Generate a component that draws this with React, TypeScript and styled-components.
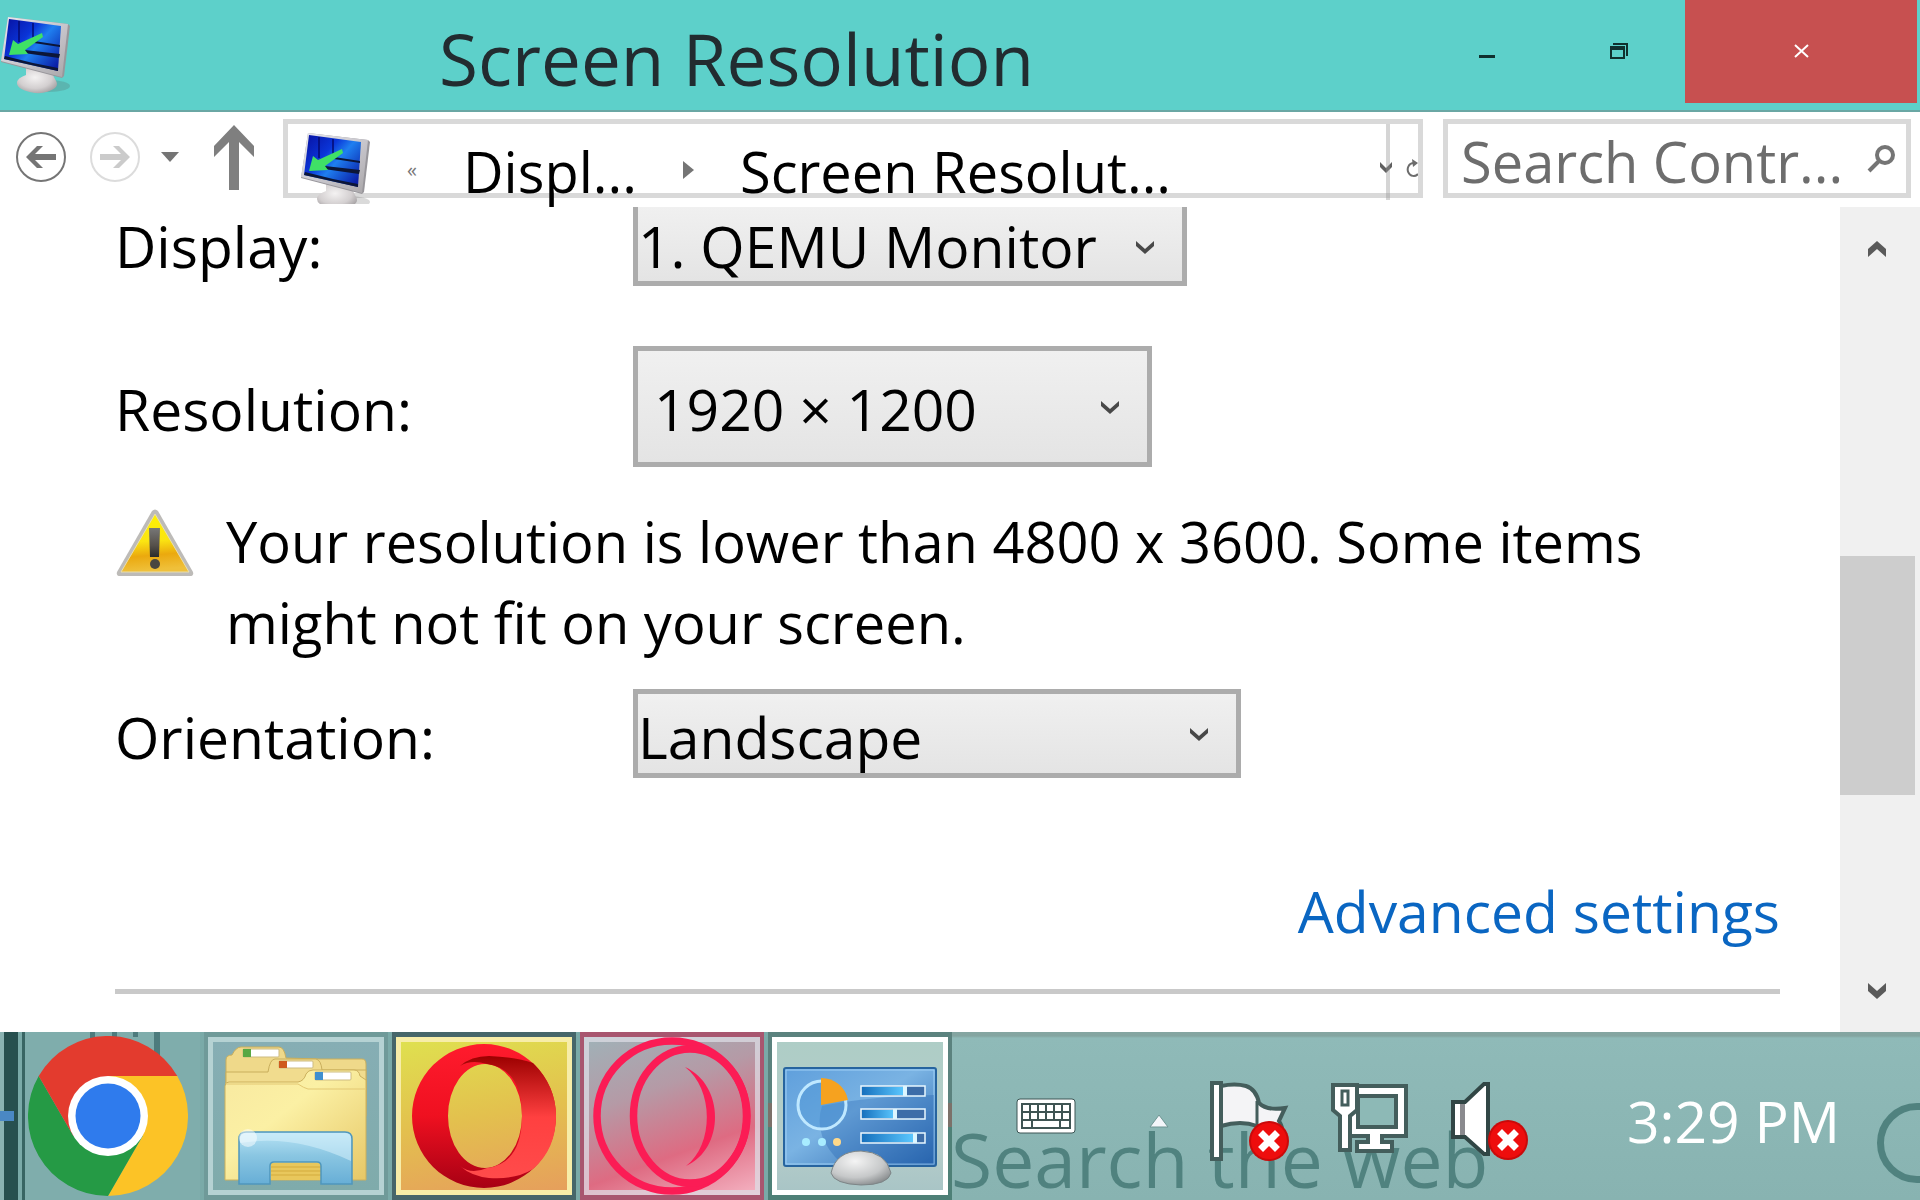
import React from "react";
import styled, { createGlobalStyle, css } from "styled-components";

const FONT = '"Open Sans", "Noto Sans", sans-serif';
const BODY = "57px";

const GlobalStyle = createGlobalStyle`
  *, *::before, *::after { box-sizing: border-box; }
  body { margin: 0; background: #fff; font-family: ${FONT}; font-size: ${BODY}; color: #000; }
  button, input, select { font: inherit; color: inherit; margin: 0; padding: 0; border: 0; border-radius: 0; background: none; }
  svg { display: block; flex: none; }
`;

/* ---------- window ---------- */

const Desktop = styled.div`
  display: flex;
  flex-direction: column;
  height: 100vh;
  min-height: 900px;
  overflow: hidden;
`;

const TitleBar = styled.header`
  display: flex;
  flex: none;
  height: 112px;
  background: #5dd0ca;
  border-bottom: 2px solid #6aa7a4;
`;

const AppIcon = styled.span`
  padding-top: 16px;
`;

const Title = styled.h1`
  flex: 1;
  margin: 0;
  padding: 8px 20px 0 0;
  font-size: 71px;
  font-weight: 400;
  line-height: 102px;
  text-align: center;
  white-space: nowrap;
  color: #222c30;
`;

const CaptionButton = styled.button<{ $close?: boolean }>`
  display: flex;
  justify-content: center;
  width: 132px;
  height: 103px;
  padding-top: 43px;
  ${(p) =>
    p.$close &&
    css`
      width: 232px;
      margin-right: 3px;
      background: #c75050;
    `}
`;

/* ---------- navigation bar ---------- */

const NavBar = styled.nav`
  display: flex;
  flex: none;
  align-items: center;
  height: 95px;
  padding: 7px 9px 9px 16px;
`;

const NavButton = styled.button<{ $after: number }>`
  margin: 0 ${(p) => p.$after}px 3px 0;
`;

const AddressBar = styled.div`
  display: flex;
  flex: 1;
  min-width: 0;
  height: 79px;
  border: 5px solid #d9d9d9;
`;

const Crumbs = styled.div`
  display: flex;
  flex: 1;
  min-width: 0;
  height: 80px;
  padding: 8px 0 0 12px;
`;

const Crumb = styled.a`
  position: relative;
  font-size: 56px;
  line-height: 78px;
  white-space: nowrap;
  color: #000;
  text-decoration: none;
`;

const CrumbMark = styled.span<{ $before: number; $after: number }>`
  display: flex;
  flex: none;
  align-items: center;
  height: 76px;
  margin: 0 ${(p) => p.$after}px 0 ${(p) => p.$before}px;
  font-size: 20px;
  line-height: 20px;
  color: #777;
`;

const HistoryButton = styled.button`
  position: relative;
  width: 20px;
  height: 76px;
  padding: 11px 0 0 3px;

  &::before {
    content: "";
    position: absolute;
    top: 0;
    left: 9px;
    width: 4px;
    height: 76px;
    background: rgba(150, 150, 150, 0.4);
  }
`;

const RefreshButton = styled.button`
  width: 12px;
  margin-left: 9px;
  padding-top: 18px;
  overflow: hidden;
`;

const SearchBox = styled.div`
  display: flex;
  align-items: center;
  width: 468px;
  height: 79px;
  margin-left: 20px;
  padding: 0 11px 0 13px;
  border: 5px solid #d9d9d9;
`;

const SearchInput = styled.input`
  flex: 1;
  min-width: 0;
  height: 69px;
  padding-top: 4px;
  font-size: 56px;
  outline: none;

  &::placeholder {
    color: #6d6d6d;
    opacity: 1;
  }
`;

/* ---------- settings page ---------- */

const Body = styled.div`
  display: flex;
  flex: 1;
  min-height: 0;
`;

const Page = styled.main`
  flex: 1;
  min-width: 0;
  padding: 0 60px 0 115px;
  overflow: hidden;
`;

const Field = styled.div<{ $before?: number }>`
  display: flex;
  align-items: baseline;
  margin-top: ${(p) => p.$before ?? 0}px;
`;

const FieldLabel = styled.label`
  width: 518px;
  line-height: 60px;
`;

const Picker = styled.span`
  display: inline-grid;
  align-items: center;

  > * {
    grid-area: 1 / 1;
  }

  svg {
    justify-self: end;
    margin: 2px 33px 0 0;
    pointer-events: none;
  }
`;

const Select = styled.select<{ $w: number; $h: number; $clipped?: boolean; $indent?: number }>`
  appearance: none;
  width: ${(p) => p.$w}px;
  height: ${(p) => p.$h}px;
  padding: ${(p) => (p.$clipped ? 0 : 4)}px 0 ${(p) => (p.$clipped ? 2 : 0)}px ${(p) => p.$indent ?? 0}px;
  border: 5px solid #acacac;
  border-top-width: ${(p) => (p.$clipped ? 0 : 5)}px;
  background: linear-gradient(#f0f0f0, #e4e4e4);
  outline: none;
`;

const Notice = styled.div`
  display: flex;
  margin-top: 34px;
`;

const NoticeIcon = styled.span`
  width: 111px;
  padding: 8px 0 0 1px;
`;

const NoticeText = styled.p`
  flex: 1;
  margin: 0;
  font-size: 56px;
  line-height: 81px;
`;

const Links = styled.div`
  display: flex;
  justify-content: flex-end;
  margin-top: 93px;
`;

const Link = styled.a`
  line-height: 80px;
  color: #0a66c2;
  text-decoration: none;
`;

const Rule = styled.hr`
  height: 5px;
  margin: 38px 0 0;
  border: 0;
  background: #c9c9c9;
`;

const ScrollBar = styled.div`
  display: flex;
  flex-direction: column;
  width: 80px;
  background: #f0f0f0;
`;

const ScrollButton = styled.button`
  display: flex;
  flex: none;
  align-items: center;
  justify-content: center;
  width: 73px;
  height: 83px;
`;

const Track = styled.div<{ $grow: number }>`
  flex: ${(p) => p.$grow};
`;

const Thumb = styled.div`
  flex: 239;
  width: 75px;
  background: #cdcdcd;
`;

/* ---------- taskbar ---------- */

const TaskBar = styled.footer`
  position: relative;
  display: flex;
  flex: none;
  height: 168px;
  overflow: hidden;
  background: linear-gradient(#84a5a1 0 4px, #8fbab8 6px, #88b3b1);
`;

const Wallpaper = styled.div`
  position: absolute;
  bottom: 1px;
  left: 951px;
  font-size: 75px;
  line-height: 80px;
  white-space: nowrap;
  color: #50827f;
`;

const Ring = styled.span`
  position: absolute;
  top: 71px;
  right: -37px;
  width: 80px;
  height: 80px;
  border: 7px solid #50827f;
  border-radius: 50%;
`;

const Apps = styled.div`
  position: relative;
  display: flex;
  gap: 4px;
  padding-left: 22px;
  background:
    linear-gradient(#4a88c4, #4a88c4) 0 79px / 14px 10px no-repeat,
    linear-gradient(90deg, #8ab3b2 0 4px, #27504f 4px 18px, #7aaaa8 18px);
`;

const INK = "linear-gradient(#4d7b7d, #4d7b7d)";

const ChromeButton = styled.button`
  width: 178px;
  padding: 0 0 0 3px;
  border-left: 3px solid #386563;
  background:
    ${INK} 65px 0 / 5px 6px no-repeat,
    ${INK} 87px 0 / 5px 6px no-repeat,
    ${INK} 108px 0 / 5px 5px no-repeat,
    ${INK} 129px 0 / 6px 26px no-repeat,
    #7fadac;
`;

type Tone = "folder" | "opera" | "gx" | "panel";

const tones: Record<Tone, { edge: string; frame: string; fill: string }> = {
  folder: { edge: "#6f9a99", frame: "#b5d2d3", fill: "linear-gradient(#86aeb4, #7fabab)" },
  opera: { edge: "#46666a", frame: "#f7eda8", fill: "linear-gradient(170deg, #dfe04f, #e3c04e 50%, #e69f5c)" },
  gx: {
    edge: "#a8566f",
    frame: "rgba(220, 220, 228, 0.75)",
    fill: "linear-gradient(160deg, #9fb2b8, #b59aa6 35%, #de6b82 68%, #f5b5c4) border-box",
  },
  panel: {
    edge: "linear-gradient(#5b827e 0 71px, #7c716a 71px 95px, #4e8077 95px)",
    frame: "#ffffff",
    fill: "linear-gradient(#aecdc6, #b5cdca 70%, #a9c5c6)",
  },
};

const TaskButton = styled.button<{ $tone: Tone }>`
  display: flex;
  width: 184px;
  padding: 5px 4px;
  background: ${(p) => tones[p.$tone].edge};

  > span {
    display: flex;
    flex: 1;
    align-items: center;
    justify-content: center;
    border: 5px solid ${(p) => tones[p.$tone].frame};
    background: ${(p) => tones[p.$tone].fill};
  }
`;

const Tray = styled.div`
  position: relative;
  display: flex;
  align-items: center;
  gap: 40px;
  margin-left: auto;
  padding: 10px 80px 0 0;
`;

const KeyboardButton = styled.button`
  margin: 0 33px 10px 0;
`;

const Clock = styled.time`
  margin-left: 59px;
  line-height: 80px;
  color: #fff;
`;

/* ---------- drawings ---------- */

const MonitorIcon = ({ id, cut = 0 }: { id: string; cut?: number }) => (
  <svg width="72" height={78 - cut} viewBox={`3 7 72 ${78 - cut}`} aria-hidden="true">
    <defs>
      <linearGradient id={`${id}s`} x1="0" y1="0" x2="1" y2="0.8">
        <stop offset="0" stopColor="#0710a0" />
        <stop offset="0.4" stopColor="#0a35d8" />
        <stop offset="0.6" stopColor="#1f7ff0" />
        <stop offset="1" stopColor="#0a1fa8" />
      </linearGradient>
      <linearGradient id={`${id}f`} x1="0" y1="0" x2="1" y2="1">
        <stop offset="0" stopColor="#e8e8ee" />
        <stop offset="0.6" stopColor="#c4c2c8" />
        <stop offset="1" stopColor="#a9a6a8" />
      </linearGradient>
      <radialGradient id={`${id}b`} cx="0.45" cy="0.4" r="0.7">
        <stop offset="0" stopColor="#f4f2f2" />
        <stop offset="0.6" stopColor="#d3cfd0" />
        <stop offset="1" stopColor="#9b9799" />
      </radialGradient>
    </defs>
    <ellipse cx="52" cy="77" rx="21" ry="6" fill="#555" opacity="0.22" />
    <path d="M29 58 L55 64 L58 70 Q62 76 58 79 Q50 85 38 84 Q20 81 20 74 Q20 69 29 66Z" fill={`url(#${id}b)`} />
    <path d="M11 8 L71 15 L73 17 L67 67 L65 69 L4 53 Z" fill="#98969b" />
    <path d="M11 8 L71 15 L65 68 L4 52 Z" fill={`url(#${id}f)`} />
    <path d="M12 10 L64 17 L61 62 L7 50 Z" fill={`url(#${id}s)`} />
    <path d="M22 12 V33 M36 14 V30" stroke="#050a70" strokeWidth="1.5" />
    <path d="M37 32 L63 36 V38 L37 34Z M28 41 L63 45 L62 49 L27 44Z M8 47 L36 54 L61 59 V62 L7 50Z" fill="#0c1638" />
    <path d="M45 24 L46 28 L28 41 L31 45 L12 46 L16 31 L21 35 Z" fill="#3fe066" />
  </svg>
);

const RoundArrow = ({ color, ring, flip }: { color: string; ring: string; flip?: boolean }) => (
  <svg width="50" height="50" viewBox="0 0 50 50" aria-hidden="true">
    <circle cx="25" cy="25" r="24" fill="none" stroke={ring} strokeWidth="2" />
    <g transform={flip ? "matrix(-1 0 0 1 50 0)" : undefined}>
      <path d="M40 22 H19 L27 14 H21 L10 25 L21 36 H27 L19 28 H40Z" fill={color} />
    </g>
  </svg>
);

const Chevron = () => (
  <svg width="18" height="13" viewBox="0 0 18 13" aria-hidden="true">
    <path d="M0 0 L9 8 L18 0 V5 L9 13 L0 5Z" fill="#484848" />
  </svg>
);

const ScrollArrow = ({ down }: { down?: boolean }) => (
  <svg width="18" height="16" viewBox="0 0 18 16" aria-hidden="true">
    <path d={down ? "M0 0 L9 8 L18 0 V8 L9 16 L0 8Z" : "M0 16 L9 8 L18 16 V8 L9 0 L0 8Z"} fill="#5a5a5a" />
  </svg>
);

const WarningIcon = () => (
  <svg width="78" height="68" viewBox="0 0 78 68" aria-hidden="true">
    <defs>
      <linearGradient id="wy" x1="0" y1="0" x2="0.1" y2="1">
        <stop offset="0" stopColor="#fff200" />
        <stop offset="0.5" stopColor="#fbe512" />
        <stop offset="0.75" stopColor="#eba90e" />
        <stop offset="1" stopColor="#efc03a" />
      </linearGradient>
      <linearGradient id="wg" x1="0" y1="0" x2="0" y2="1">
        <stop offset="0" stopColor="#777" />
        <stop offset="0.6" stopColor="#55504a" />
        <stop offset="1" stopColor="#2b2b2b" />
      </linearGradient>
    </defs>
    <path d="M36 2 Q39 -1 42 2 L77 63 Q78 67 74 67 H4 Q0 67 1 63Z" fill="#bdbbb8" />
    <path d="M39 5 L73 63 H5Z" fill="url(#wy)" stroke="#e9dfae" strokeWidth="1" />
    <path d="M33 19 H44 L43 48 H34Z" fill="url(#wg)" />
    <ellipse cx="39" cy="55" rx="5" ry="5" fill="#4a4740" />
  </svg>
);

const ChromeIcon = () => (
  <svg width="160" height="160" viewBox="0 0 160 160" aria-hidden="true">
    <path d="M80 80 L10.700 40 A80 80 0 0 1 149.300 40 Z" fill="#e33b2e" />
    <path d="M80 40 H149.300 A80 80 0 0 1 80 160 L114.600 100 Z" fill="#fcc326" />
    <path d="M10.700 40 L45.400 100 L114.600 100 L80 160 A80 80 0 0 1 10.700 40Z" fill="#259a45" />
    <path d="M10.700 40 L45.400 100 L80 80 L80 40Z" fill="#e33b2e" />
    <circle cx="80" cy="80" r="40" fill="#fff" />
    <circle cx="80" cy="80" r="32.500" fill="#2f7bed" />
  </svg>
);

const FolderIcon = () => (
  <svg width="144" height="140" viewBox="0 0 144 140" aria-hidden="true">
    <defs>
      <linearGradient id="ff" x1="0" y1="0" x2="1" y2="1">
        <stop offset="0" stopColor="#f8e9a0" />
        <stop offset="0.4" stopColor="#fbf0a4" />
        <stop offset="1" stopColor="#e6c766" />
      </linearGradient>
      <linearGradient id="fb" x1="0" y1="0" x2="0" y2="1">
        <stop offset="0" stopColor="#b9e4f5" />
        <stop offset="0.45" stopColor="#8ac6e2" />
        <stop offset="1" stopColor="#67aed6" />
      </linearGradient>
    </defs>
    <path d="M2 14 Q2 9 8 9 Q12 1 17 1 H55 Q60 1 62 12 L96 13 H138 Q142 13 142 18 V60 H2Z" fill="#efd98a" stroke="#c9ae5c" />
    <rect x="19" y="3" width="36" height="8" rx="1" fill="#fff" stroke="#cdbb80" />
    <rect x="19" y="3" width="8" height="8" fill="#58a844" />
    <path d="M2 26 H44 Q46 13 51 13 H92 Q97 14 98 24 H142 V70 H2Z" fill="#f1dc8e" stroke="#c9ae5c" />
    <rect x="55" y="15" width="34" height="7" rx="1" fill="#fff" stroke="#cdbb80" />
    <rect x="55" y="15" width="8" height="7" fill="#cf5a1d" />
    <path d="M1 40 Q1 36 5 36 H74 Q80 35 82 28 Q84 24 89 24 H130 Q135 24 136 30 L142 34 V134 H1Z" fill="url(#ff)" stroke="#ccb05c" />
    <rect x="91" y="26" width="36" height="8" rx="1" fill="#fff" stroke="#cdbb80" />
    <rect x="91" y="26" width="8" height="8" fill="#3f8fcf" />
    <path d="M2 38 H74 Q80 42 84 43 H141" fill="none" stroke="#e3c873" strokeWidth="1" />
    <path d="M47 117 H97 V134 H47Z" fill="#e8c75c" />
    <path d="M47 121 H97 M47 125 H97 M47 129 H97" stroke="#d3ab3c" />
    <path d="M15 93 Q15 86 22 86 H121 Q128 86 128 93 V138 H97 V120 Q97 116 93 116 H50 Q46 116 46 120 V138 H15Z" fill="url(#fb)" stroke="#4f97bd" strokeWidth="1.500" />
    <path d="M16 97 Q70 88 127 115 V93 Q127 87 121 87 H22 Q16 87 16 93Z" fill="#d5f1fb" opacity="0.55" />
    <circle cx="24" cy="92" r="9" fill="#fff" opacity="0.5" />
  </svg>
);

const OperaIcon = () => (
  <svg width="146" height="146" viewBox="0 0 146 146" aria-hidden="true">
    <defs>
      <linearGradient id="o1" x1="0" y1="0" x2="0" y2="1">
        <stop offset="0" stopColor="#ff1b2d" />
        <stop offset="0.5" stopColor="#ef1020" />
        <stop offset="1" stopColor="#a70014" />
      </linearGradient>
      <linearGradient id="o2" x1="0" y1="0" x2="0" y2="1">
        <stop offset="0" stopColor="#9c0000" />
        <stop offset="0.5" stopColor="#ff4040" />
        <stop offset="1" stopColor="#ff4b4b" />
      </linearGradient>
    </defs>
    <path fillRule="evenodd" d="M73 1 A72 72 0 1 0 73 145 A72 72 0 1 0 73 1Z M74 21 A37 52 0 1 1 74 125 A37 52 0 1 1 74 21Z" fill="url(#o1)" />
    <path d="M49 23 Q60 13 78 13 Q104 14 122 20 Q145 43 145 73 Q145 106 122 126 Q104 137 78 135 Q60 133 49 123 Q60 132 76 125 Q111 120 111 73 Q111 26 76 21 Q60 16 49 23Z" fill="url(#o2)" />
  </svg>
);

const GxIcon = () => (
  <svg width="160" height="160" viewBox="0 0 160 160" aria-hidden="true" overflow="visible">
    <circle cx="80" cy="80" r="75" fill="none" stroke="#fb1c55" strokeWidth="7.500" />
    <ellipse cx="98" cy="80" rx="56.500" ry="67" fill="none" stroke="#fb1c55" strokeWidth="7.500" />
    <path d="M93 31 C133 49 133 113 94 130 C122 109 122 53 93 31Z" fill="#fb1c55" />
  </svg>
);

const PanelIcon = () => (
  <svg width="156" height="148" viewBox="0 -24 156 148" aria-hidden="true">
    <defs>
      <linearGradient id="pb" x1="0" y1="0" x2="1" y2="1">
        <stop offset="0" stopColor="#5f9fdc" />
        <stop offset="0.45" stopColor="#7ab3e3" />
        <stop offset="1" stopColor="#2a66ae" />
      </linearGradient>
      <linearGradient id="pf" x1="0" y1="0" x2="1" y2="0">
        <stop offset="0" stopColor="#1670bd" />
        <stop offset="1" stopColor="#5cc8ff" />
      </linearGradient>
      <radialGradient id="pd" cx="0.4" cy="0.3" r="0.8">
        <stop offset="0" stopColor="#f4f4f4" />
        <stop offset="0.6" stopColor="#c6c8c9" />
        <stop offset="1" stopColor="#7c8082" />
      </radialGradient>
    </defs>
    <rect x="2" y="2" width="152" height="98" rx="2" fill="url(#pb)" stroke="#27649f" strokeWidth="2" />
    <rect x="4" y="4" width="148" height="94" fill="none" stroke="#9fd0f5" strokeWidth="1" />
    <path d="M40 40 Q90 30 152 29 V98 H60 Q30 70 40 40Z" fill="#1d5cab" opacity="0.3" />
    <circle cx="40" cy="39" r="24" fill="#4e95d6" fillOpacity="0.5" stroke="#bfe8ff" strokeWidth="3" />
    <path d="M39 39 V12 A27 27 0 0 1 66 34Z" fill="#f6a21f" />
    {[20, 43, 67].map((y, i) => (
      <g key={y}>
        <rect x="79" y={y} width="64" height="10" fill="#3d6da8" stroke="#e8f8ff" strokeWidth="1.500" />
        <rect x="80" y={y + 1} width={[42, 33, 52][i]} height="8" fill="url(#pf)" />
        <rect x={[121, 111, 131][i]} y={y} width="4" height="10" fill="#dcf6ff" />
      </g>
    ))}
    <circle cx="24" cy="76" r="4" fill="#a8ecff" />
    <circle cx="40" cy="76" r="4" fill="#a8ecff" />
    <circle cx="55" cy="76" r="4" fill="#ffd98a" />
    <path d="M49 107 Q54 85 79 85 Q104 86 109 107 Q106 119 79 119 Q52 118 49 107Z" fill="url(#pd)" stroke="#7d8587" />
  </svg>
);

const KeyboardIcon = () => (
  <svg width="60" height="36" viewBox="0 0 60 36" aria-hidden="true">
    <rect x="1" y="1" width="58" height="34" rx="3" fill="#fff" stroke="#3c5554" />
    <rect x="5" y="5" width="50" height="26" fill="#3f5453" />
    <path d="M7 7h6v6H7z M15 7h6v6h-6z M23 7h6v6h-6z M31 7h6v6h-6z M39 7h6v6h-6z M47 7h6v6h-6z M7 15h6v6H7z M15 15h6v6h-6z M23 15h6v6h-6z M31 15h6v6h-6z M39 15h6v6h-6z M47 15h6v6h-6z M7 23h8v6H7z M17 23h26v6H17z M45 23h8v6h-8z" fill="#fff" />
  </svg>
);

const Badge = ({ x, y }: { x: number; y: number }) => (
  <g transform={`translate(${x} ${y})`}>
    <circle r="20" fill="#c90a0a" />
    <circle r="18" fill="#ee0d0d" />
    <path d="M-6 -6 L6 6 M6 -6 L-6 6" stroke="#fff" strokeWidth="7" strokeLinecap="square" />
  </g>
);

const FlagIcon = () => (
  <svg width="81" height="81" viewBox="0 0 81 81" aria-hidden="true">
    <path d="M12 5 Q26 2 37 5 Q47 8 50 22 Q58 30 76 27 L70 40 Q76 50 70 52 Q50 56 48 45 Q32 39 12 45Z" fill="#f4f4f6" stroke="#445e5c" strokeWidth="4" />
    <path d="M48 20 V46" stroke="#445e5c" strokeWidth="3" />
    <rect x="3" y="2" width="9" height="76" fill="#fff" stroke="#445e5c" strokeWidth="4" />
    <Badge x={60} y={60} />
  </svg>
);

const NetworkIcon = () => (
  <svg width="80" height="78" viewBox="0 0 80 78" aria-hidden="true">
    <path d="M20 4 H76 V54 H52 V60 H62 V69 H27 V60 H38 V54 H20Z" fill="#fff" stroke="#445e5c" strokeWidth="4" />
    <rect x="28" y="14" width="38" height="31" fill="#8db9b6" stroke="#445e5c" strokeWidth="4" />
    <path d="M3 3 H27 V28 L20 34 V68 H10 V34 L3 28Z" fill="#fff" stroke="#445e5c" strokeWidth="4" />
    <rect x="12" y="9" width="6" height="14" fill="#fff" stroke="#445e5c" strokeWidth="3" />
  </svg>
);

const SpeakerIcon = () => (
  <svg width="78" height="78" viewBox="0 0 78 78" aria-hidden="true">
    <path d="M3 20 H15 L34 2 H38 V72 H34 L15 55 H3Z" fill="#fff" stroke="#314645" strokeWidth="4" />
    <rect x="10" y="22" width="5" height="31" fill="#8a8a8e" />
    <Badge x={58} y={58} />
  </svg>
);

/* ---------- app ---------- */

export default function App() {
  return (
    <Desktop>
      <GlobalStyle />
      <TitleBar>
        <AppIcon>
          <MonitorIcon id="t" />
        </AppIcon>
        <Title>Screen Resolution</Title>
        <CaptionButton aria-label="Minimize">
          <svg width="16" height="16" viewBox="0 0 16 16">
            <rect y="12" width="16" height="3" fill="#10302e" />
          </svg>
        </CaptionButton>
        <CaptionButton aria-label="Restore">
          <svg width="18" height="16" viewBox="0 0 18 16">
            <path d="M3 0 H18 V13 H16 V2 H3Z M0 3 H15 V16 H0Z M2 7 V14 H13 V7Z" fillRule="evenodd" fill="#10302e" />
          </svg>
        </CaptionButton>
        <CaptionButton $close aria-label="Close">
          <svg width="15" height="16" viewBox="0 0 15 16">
            <path d="M1 2 L14 14 M14 2 L1 14" stroke="#fff" strokeWidth="2" />
          </svg>
        </CaptionButton>
      </TitleBar>

      <NavBar>
        <NavButton $after={24} aria-label="Back">
          <RoundArrow color="#757575" ring="#757575" />
        </NavButton>
        <NavButton $after={21} aria-label="Forward">
          <RoundArrow color="#cbcbcb" ring="#dcdcdc" flip />
        </NavButton>
        <NavButton $after={35} aria-label="Recent pages">
          <svg width="18" height="10" viewBox="0 0 18 10">
            <path d="M0 0 H18 L9 10Z" fill="#757575" />
          </svg>
        </NavButton>
        <NavButton $after={29} aria-label="Up">
          <svg width="40" height="65" viewBox="0 0 40 65">
            <path d="M20 0 L40 21 V32 L25 17 V65 H15 V17 L0 32 V21Z" fill="#7f7f7f" />
          </svg>
        </NavButton>
        <AddressBar>
          <Crumbs>
            <MonitorIcon id="a" cut={6} />
            <CrumbMark $before={35} $after={46}>«</CrumbMark>
            <Crumb href="#display">Displ...</Crumb>
            <CrumbMark $before={46} $after={46}>
              <svg width="11" height="18" viewBox="0 0 11 18">
                <path d="M0 0 L11 9 L0 18Z" fill="#757575" />
              </svg>
            </CrumbMark>
            <Crumb href="#resolution">Screen Resolut...</Crumb>
          </Crumbs>
          <HistoryButton aria-label="Previous locations">
            <svg width="12" height="11" viewBox="0 0 12 11">
              <path d="M0 0 L6 6 L12 0 V5 L6 11 L0 5Z" fill="#606060" />
            </svg>
          </HistoryButton>
          <RefreshButton aria-label="Refresh">
            <svg width="17" height="18" viewBox="0 0 17 18">
              <path d="M7 4 A6 6.500 0 1 0 12 15" fill="none" stroke="#6c6c6c" strokeWidth="2" />
              <path d="M6 0 L12 4 L7 8Z" fill="#6c6c6c" />
            </svg>
          </RefreshButton>
        </AddressBar>
        <SearchBox>
          <SearchInput aria-label="Search Control Panel" placeholder="Search Contr..." />
          <svg width="28" height="28" viewBox="0 0 28 28" aria-hidden="true">
            <circle cx="18" cy="10" r="8" fill="none" stroke="#757575" strokeWidth="4" />
            <path d="M12 16 L2 26" stroke="#757575" strokeWidth="4" />
          </svg>
        </SearchBox>
      </NavBar>

      <Body>
        <Page>
          <Field>
            <FieldLabel htmlFor="display">Display:</FieldLabel>
            <Picker>
              <Select id="display" $w={554} $h={79} $clipped>
                <option>1. QEMU Monitor</option>
              </Select>
              <Chevron />
            </Picker>
          </Field>
          <Field $before={60}>
            <FieldLabel htmlFor="resolution">Resolution:</FieldLabel>
            <Picker>
              <Select id="resolution" $w={519} $h={121} $indent={16}>
                <option>1920 × 1200</option>
              </Select>
              <Chevron />
            </Picker>
          </Field>
          <Notice>
            <NoticeIcon>
              <WarningIcon />
            </NoticeIcon>
            <NoticeText>Your resolution is lower than 4800 x 3600. Some items might not fit on your screen.</NoticeText>
          </Notice>
          <Field $before={26}>
            <FieldLabel htmlFor="orientation">Orientation:</FieldLabel>
            <Picker>
              <Select id="orientation" $w={608} $h={89}>
                <option>Landscape</option>
              </Select>
              <Chevron />
            </Picker>
          </Field>
          <Links>
            <Link href="#advanced">Advanced settings</Link>
          </Links>
          <Rule />
        </Page>
        <ScrollBar>
          <ScrollButton aria-label="Scroll up">
            <ScrollArrow />
          </ScrollButton>
          <Track $grow={266} />
          <Thumb />
          <Track $grow={154} />
          <ScrollButton aria-label="Scroll down">
            <ScrollArrow down />
          </ScrollButton>
        </ScrollBar>
      </Body>

      <TaskBar>
        <Wallpaper>Search the web</Wallpaper>
        <Ring />
        <Apps>
          <ChromeButton aria-label="Chrome">
            <ChromeIcon />
          </ChromeButton>
          <TaskButton $tone="folder" aria-label="File Explorer">
            <span>
              <FolderIcon />
            </span>
          </TaskButton>
          <TaskButton $tone="opera" aria-label="Opera">
            <span>
              <OperaIcon />
            </span>
          </TaskButton>
          <TaskButton $tone="gx" aria-label="Opera GX">
            <span>
              <GxIcon />
            </span>
          </TaskButton>
          <TaskButton $tone="panel" aria-label="Control Panel">
            <span>
              <PanelIcon />
            </span>
          </TaskButton>
        </Apps>
        <Tray>
          <KeyboardButton aria-label="Touch keyboard">
            <KeyboardIcon />
          </KeyboardButton>
          <button aria-label="Show hidden icons">
            <svg width="20" height="13" viewBox="0 0 20 13">
              <path d="M10 0 L19 12 H1Z" fill="#f4f6fa" stroke="#6f9593" />
            </svg>
          </button>
          <button aria-label="Action Center">
            <FlagIcon />
          </button>
          <button aria-label="Network">
            <NetworkIcon />
          </button>
          <button aria-label="Volume">
            <SpeakerIcon />
          </button>
          <Clock>3:29 PM</Clock>
        </Tray>
      </TaskBar>
    </Desktop>
  );
}
